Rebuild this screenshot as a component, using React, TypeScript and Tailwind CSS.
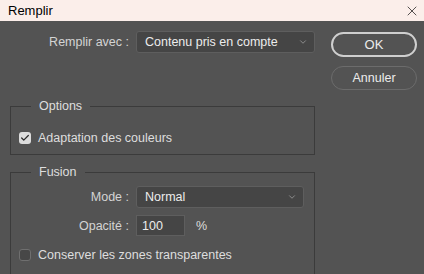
import { Check, ChevronDown, X } from 'lucide-react'

function Select({ value, width }: { value: string; width: string }) {
  return (
    <div
      className={`flex h-[22px] items-center justify-between rounded-[3px] border border-[#5e5e5e] bg-[#454545] pl-[8px] pr-[6px] text-[#ececec] ${width}`}
    >
      <span>{value}</span>
      <ChevronDown size={10} strokeWidth={1.5} className="text-[#b5b5b5]" />
    </div>
  )
}

function Box({ checked }: { checked: boolean }) {
  return (
    <span
      className={`flex h-[12px] w-[12px] items-center justify-center rounded-[3px] ${
        checked ? 'bg-[#dcdcdc]' : 'border border-[#6f6f6f] bg-[#474747]'
      }`}
    >
      {checked && <Check size={10} strokeWidth={3} className="text-[#2a2a2a]" />}
    </span>
  )
}

export default function App() {
  return (
    <div className="h-[274px] w-[424px] overflow-hidden font-['Liberation_Sans',Arial,sans-serif] text-[12.5px] leading-[16px]">
      <div className="flex h-[21px] items-center justify-between bg-[#fbeeea] pl-[8px] pr-[4px] text-black">
        <span className="text-[13px]">Remplir</span>
        <X size={16} strokeWidth={1} className="text-black" />
      </div>

      <div className="flex h-[253px] bg-[#535353] text-[#dedede]">
        <div className="ml-[10px] w-[305px]">
          {/* fill source */}
          <div className="mt-[10px] flex items-center">
            <span className="w-[119px] text-right text-[#d4d4d4]">Remplir avec :</span>
            <div className="ml-[7px]">
              <Select value="Contenu pris en compte" width="w-[179px]" />
            </div>
          </div>

          <fieldset className="mt-[45px] border border-[#3b3b3b] px-[8px] pb-[8px]">
            <legend className="ml-[12px] px-[8px]">Options</legend>
            <label className="mt-[16px] flex items-center gap-[7px]">
              <Box checked />
              <span>Adaptation des couleurs</span>
            </label>
          </fieldset>

          <fieldset className="mt-[9px] h-[120px] border border-[#3b3b3b] px-[8px]">
            <legend className="ml-[12px] px-[8px]">Fusion</legend>
            <div className="mt-[6px] flex items-center">
              <span className="w-[110px] text-right text-[#d4d4d4]">Mode :</span>
              <div className="ml-[7px]">
                <Select value="Normal" width="w-[168px]" />
              </div>
            </div>
            <div className="mt-[7px] flex items-center">
              <span className="w-[110px] text-right text-[#d4d4d4]">Opacité :</span>
              <div className="ml-[7px] flex h-[21px] w-[49px] items-center border border-[#5e5e5e] bg-[#454545] pl-[5px] text-[#ececec]">
                100
              </div>
              <span className="ml-[11px]">%</span>
            </div>
            <label className="mt-[11px] flex items-center gap-[7px]">
              <Box checked={false} />
              <span>Conserver les zones transparentes</span>
            </label>
          </fieldset>
        </div>

        <div className="ml-[16px] mt-[11px] flex w-[86px] flex-col gap-[9px]">
          <button className="h-[25px] rounded-full border-2 border-[#cfcfcf] text-[13px] text-[#ececec]">OK</button>
          <button className="h-[24px] rounded-full border border-[#6c6c6c] text-[#ececec]">Annuler</button>
        </div>
      </div>
    </div>
  )
}
